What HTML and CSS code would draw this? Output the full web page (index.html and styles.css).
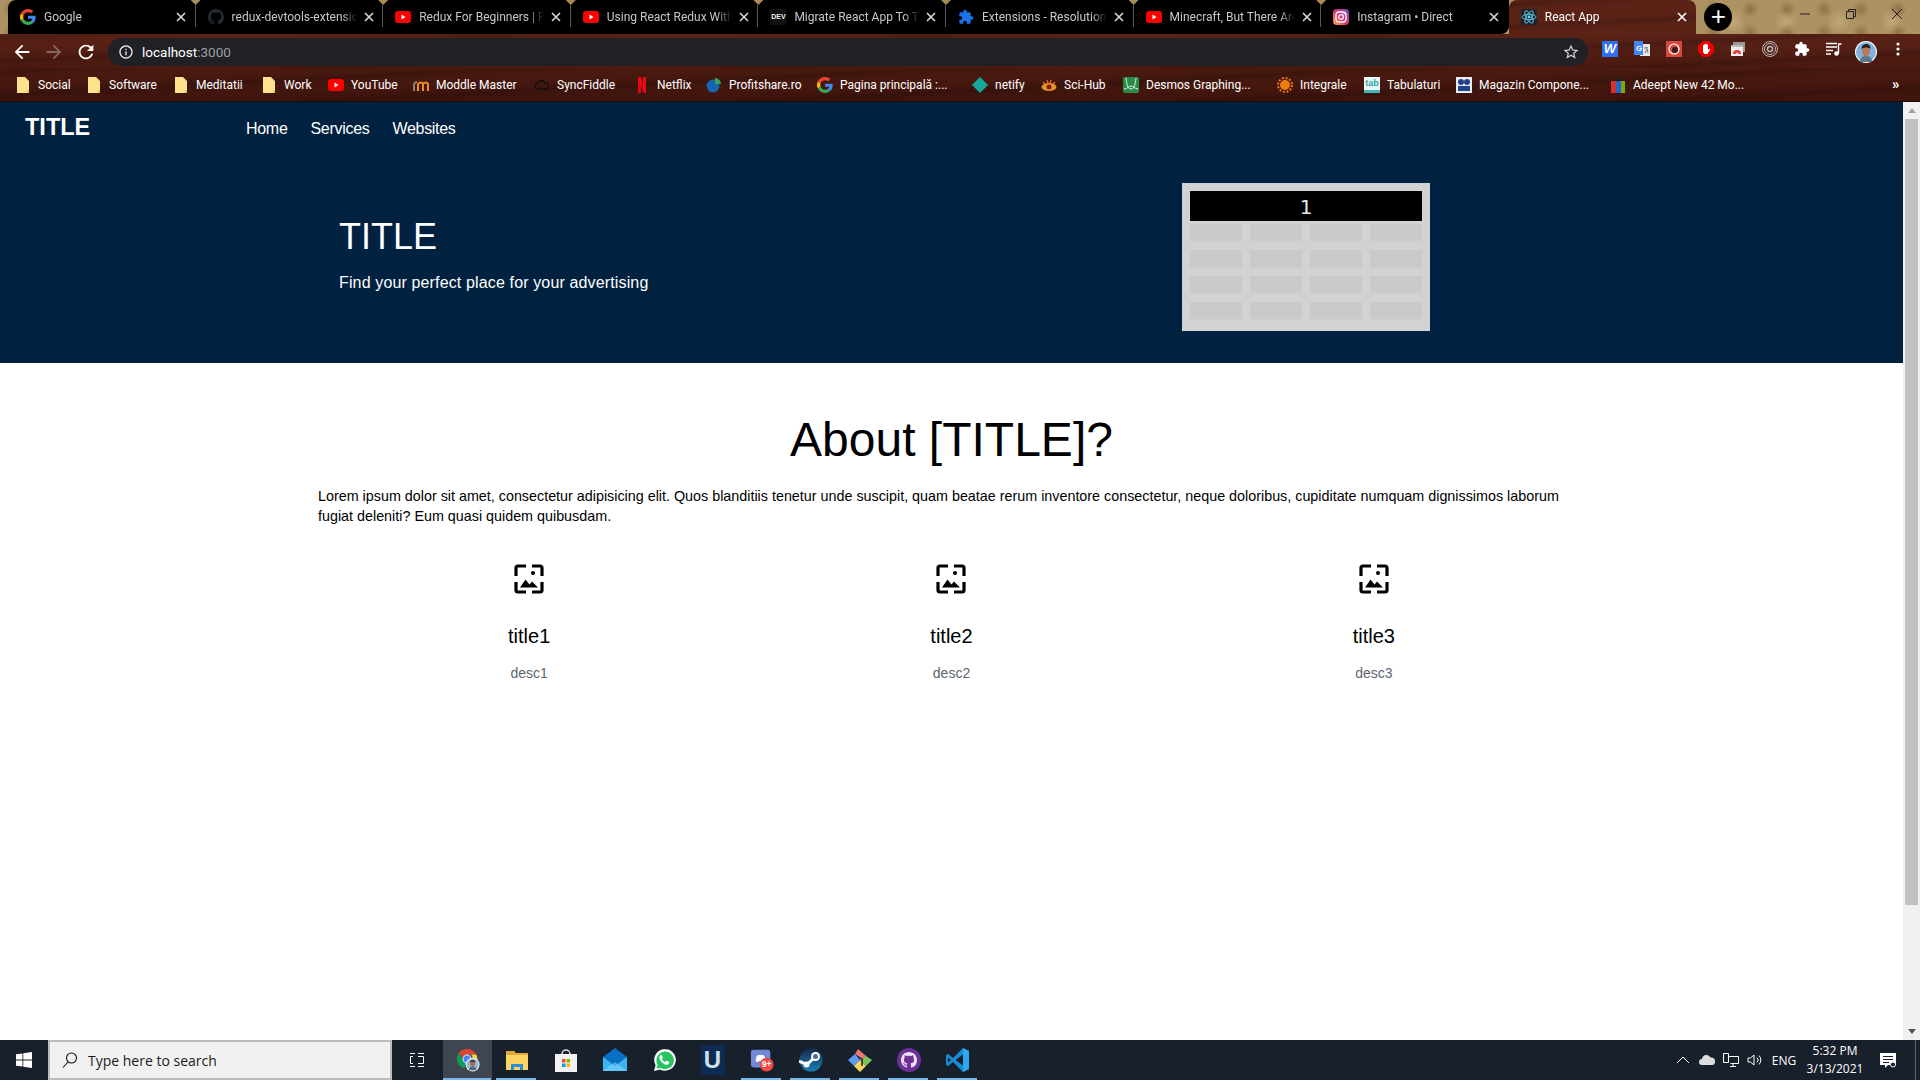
FILE: index.html
```html
<!DOCTYPE html>
<html lang="en">
<head>
    <meta charset="UTF-8">
    <title>React App</title>
    <link rel="stylesheet" href="styles.css">
</head>
<body>
    <svg class="sprites" width="0" height="0">
        <symbol id="i-google" viewBox="0 0 48 48">
            <path fill="#EA4335" d="M24 9.5c3.54 0 6.71 1.22 9.21 3.6l6.85-6.85C35.9 2.38 30.47 0 24 0 14.62 0 6.51 5.38 2.56 13.22l7.98 6.19C12.43 13.72 17.74 9.5 24 9.5z"/>
            <path fill="#4285F4" d="M46.98 24.55c0-1.57-.15-3.09-.38-4.55H24v9.02h12.94c-.58 2.96-2.26 5.48-4.78 7.18l7.73 6c4.51-4.18 7.09-10.36 7.09-17.65z"/>
            <path fill="#FBBC05" d="M10.53 28.59c-.48-1.45-.76-2.99-.76-4.59s.27-3.14.76-4.59l-7.98-6.19C.92 16.46 0 20.12 0 24c0 3.88.92 7.54 2.56 10.78l7.97-6.19z"/>
            <path fill="#34A853" d="M24 48c6.48 0 11.93-2.13 15.89-5.81l-7.73-6c-2.15 1.45-4.92 2.3-8.16 2.3-6.26 0-11.57-4.22-13.47-9.91l-7.98 6.19C6.51 42.62 14.62 48 24 48z"/>
        </symbol>
        <symbol id="i-github" viewBox="0 0 16 16">
            <path d="M8 0C3.58 0 0 3.58 0 8c0 3.54 2.29 6.53 5.47 7.59.4.07.55-.17.55-.38 0-.19-.01-.82-.01-1.49-2.01.37-2.53-.49-2.69-.94-.09-.23-.48-.94-.82-1.13-.28-.15-.68-.52-.01-.53.63-.01 1.08.58 1.23.82.72 1.21 1.87.87 2.33.66.07-.52.28-.87.51-1.07-1.78-.2-3.64-.89-3.64-3.95 0-.87.31-1.59.82-2.15-.08-.2-.36-1.02.08-2.12 0 0 .67-.21 2.2.82.64-.18 1.32-.27 2-.27.68 0 1.36.09 2 .27 1.53-1.04 2.2-.82 2.2-.82.44 1.1.16 1.92.08 2.12.51.56.82 1.27.82 2.15 0 3.07-1.87 3.75-3.65 3.95.29.25.54.73.54 1.48 0 1.07-.01 1.93-.01 2.2 0 .21.15.46.55.38A8.013 8.013 0 0016 8c0-4.42-3.58-8-8-8z"/>
        </symbol>
        <symbol id="i-youtube" viewBox="0 0 16 16">
            <rect x="0" y="2" width="16" height="12" rx="3" fill="#f00"/>
            <path d="M6.5 5.5v5l4-2.5z" fill="#fff"/>
        </symbol>
        <symbol id="i-puzzle" viewBox="0 0 24 24">
            <path d="M20.5 11H19V7c0-1.1-.9-2-2-2h-4V3.5C13 2.12 11.88 1 10.5 1S8 2.12 8 3.5V5H4c-1.1 0-1.99.9-1.99 2v3.8H3.5c1.49 0 2.7 1.21 2.7 2.7s-1.21 2.7-2.7 2.7H2V20c0 1.1.9 2 2 2h3.8v-1.5c0-1.49 1.21-2.7 2.7-2.7 1.49 0 2.7 1.21 2.7 2.7V22H17c1.1 0 2-.9 2-2v-4h1.5c1.38 0 2.5-1.12 2.5-2.5S21.88 11 20.5 11z"/>
        </symbol>
        <symbol id="i-insta" viewBox="0 0 16 16">
            <defs>
                <linearGradient id="insta-grad" x1="0" y1="1" x2="1" y2="0">
                    <stop offset="0" stop-color="#fdb33c"/>
                    <stop offset=".45" stop-color="#e9306f"/>
                    <stop offset="1" stop-color="#6a4fd0"/>
                </linearGradient>
            </defs>
            <rect width="16" height="16" rx="4" fill="url(#insta-grad)"/>
            <rect x="3" y="3" width="10" height="10" rx="3" fill="none" stroke="#fff" stroke-width="1.3"/>
            <circle cx="8" cy="8" r="2.3" fill="none" stroke="#fff" stroke-width="1.3"/>
            <circle cx="11" cy="5" r=".7" fill="#fff"/>
        </symbol>
        <symbol id="i-react" viewBox="0 0 16 16">
            <rect width="16" height="16" rx="2" fill="#20232a"/>
            <g fill="none" stroke="#61dafb" stroke-width=".8">
                <ellipse cx="8" cy="8" rx="7" ry="2.7"/>
                <ellipse cx="8" cy="8" rx="7" ry="2.7" transform="rotate(60 8 8)"/>
                <ellipse cx="8" cy="8" rx="7" ry="2.7" transform="rotate(120 8 8)"/>
            </g>
            <circle cx="8" cy="8" r="1.4" fill="#61dafb"/>
        </symbol>
        <symbol id="i-folder" viewBox="0 0 16 16">
            <path d="M2 0h8l4 4v12H2z" fill="#fbe28b"/>
            <path d="M12 16v-3h2v3z" fill="#e8c55a"/>
        </symbol>
        <symbol id="i-close" viewBox="0 0 10 10">
            <path d="M1 1l8 8M9 1l-8 8" fill="none" stroke="currentColor" stroke-width="1.6"/>
        </symbol>
        <symbol id="i-image" viewBox="0 0 32 32">
            <g fill="none" stroke="#000" stroke-width="3.2">
                <path d="M3 13V5a2 2 0 0 1 2-2h8"/>
                <path d="M19 3h8a2 2 0 0 1 2 2v8"/>
                <path d="M29 19v8a2 2 0 0 1-2 2h-8"/>
                <path d="M13 29H5a2 2 0 0 1-2-2v-8"/>
            </g>
            <circle cx="20" cy="10" r="2"/>
            <path d="M7 24.5l5.5-8 4 5 2.5-3 6 6z"/>
        </symbol>
    </svg>

    <header class="browser">
        <div class="tabstrip">
            <div class="tab first">
                <svg class="favicon"><use href="#i-google"/></svg>
                <span class="tab-title">Google</span>
                <svg class="tab-close"><use href="#i-close"/></svg>
            </div>
            <div class="tab">
                <svg class="favicon fav-github"><use href="#i-github"/></svg>
                <span class="tab-title">redux-devtools-extension</span>
                <svg class="tab-close"><use href="#i-close"/></svg>
            </div>
            <div class="tab">
                <svg class="favicon"><use href="#i-youtube"/></svg>
                <span class="tab-title">Redux For Beginners | React</span>
                <svg class="tab-close"><use href="#i-close"/></svg>
            </div>
            <div class="tab">
                <svg class="favicon"><use href="#i-youtube"/></svg>
                <span class="tab-title">Using React Redux With Hooks</span>
                <svg class="tab-close"><use href="#i-close"/></svg>
            </div>
            <div class="tab">
                <span class="favicon fav-dev">DEV</span>
                <span class="tab-title">Migrate React App To TypeScript</span>
                <svg class="tab-close"><use href="#i-close"/></svg>
            </div>
            <div class="tab">
                <svg class="favicon fav-puzzle"><use href="#i-puzzle"/></svg>
                <span class="tab-title">Extensions - Resolution Zoom</span>
                <svg class="tab-close"><use href="#i-close"/></svg>
            </div>
            <div class="tab">
                <svg class="favicon"><use href="#i-youtube"/></svg>
                <span class="tab-title">Minecraft, But There Are More</span>
                <svg class="tab-close"><use href="#i-close"/></svg>
            </div>
            <div class="tab last">
                <svg class="favicon"><use href="#i-insta"/></svg>
                <span class="tab-title">Instagram • Direct</span>
                <svg class="tab-close"><use href="#i-close"/></svg>
            </div>
            <div class="tab active">
                <svg class="favicon"><use href="#i-react"/></svg>
                <span class="tab-title">React App</span>
                <svg class="tab-close"><use href="#i-close"/></svg>
            </div>
            <div class="new-tab">+</div>
            <div class="win-controls">
                <svg viewBox="0 0 10 10"><path d="M0 5h10" stroke="#222" fill="none"/></svg>
                <svg viewBox="0 0 10 10"><path d="M.5 2.5h7v7h-7zM2.5 2.5v-2h7v7h-2" stroke="#222" fill="none"/></svg>
                <svg viewBox="0 0 10 10"><path d="M0 0l10 10M10 0L0 10" stroke="#222" fill="none"/></svg>
            </div>
        </div>

        <div class="toolbar">
            <div class="nav-btn">
                <svg viewBox="0 0 24 24"><path d="M20 11H7.83l5.59-5.59L12 4l-8 8 8 8 1.41-1.41L7.83 13H20v-2z"/></svg>
            </div>
            <div class="nav-btn dim">
                <svg viewBox="0 0 24 24"><path d="M4 11h12.17l-5.59-5.59L12 4l8 8-8 8-1.41-1.41L16.17 13H4v-2z"/></svg>
            </div>
            <div class="nav-btn">
                <svg viewBox="0 0 24 24"><path d="M17.65 6.35C16.2 4.9 14.21 4 12 4c-4.42 0-7.99 3.58-7.99 8s3.57 8 7.99 8c3.73 0 6.84-2.55 7.73-6h-2.08c-.82 2.33-3.04 4-5.65 4-3.31 0-6-2.69-6-6s2.69-6 6-6c1.66 0 3.14.69 4.22 1.78L13 11h7V4l-2.35 2.35z"/></svg>
            </div>
            <div class="omnibox">
                <svg class="omni-info" viewBox="0 0 24 24"><path d="M11 7h2v2h-2zm0 4h2v6h-2zm1-9C6.48 2 2 6.48 2 12s4.48 10 10 10 10-4.48 10-10S17.52 2 12 2zm0 18c-4.41 0-8-3.59-8-8s3.59-8 8-8 8 3.59 8 8-3.59 8-8 8z"/></svg>
                <span class="omni-url">localhost<span class="omni-port">:3000</span></span>
                <svg class="omni-star" viewBox="0 0 24 24"><path d="M22 9.24l-7.19-.62L12 2 9.19 8.63 2 9.24l5.46 4.73L5.82 21 12 17.27 18.18 21l-1.63-7.03L22 9.24zM12 15.4l-3.76 2.27 1-4.28-3.32-2.88 4.38-.38L12 6.1l1.71 4.04 4.38.38-3.32 2.88 1 4.28L12 15.4z"/></svg>
            </div>
            <div class="extensions">
                <div class="ext"><span class="ext-w">W</span></div>
                <div class="ext">
                    <svg viewBox="0 0 16 16">
                        <rect x="6" y="3" width="10" height="12" fill="#e8e8e8"/>
                        <path d="M0 0h9v14H0z" fill="#4285f4"/>
                        <text x="2" y="10" font-size="8" font-weight="700" fill="#fff" font-family="Liberation Sans">G</text>
                        <path d="M10 7h4M12 6v1M11 12l2-4 1 4" stroke="#777" fill="none"/>
                    </svg>
                </div>
                <div class="ext">
                    <svg viewBox="0 0 16 16">
                        <rect width="16" height="16" fill="#d8483f"/>
                        <circle cx="8" cy="8" r="5" fill="none" stroke="#fff" stroke-width="1.2"/>
                        <circle cx="9" cy="9" r="3" fill="#3a1a1a"/>
                    </svg>
                </div>
                <div class="ext">
                    <svg viewBox="0 0 16 16">
                        <path d="M5 0h6l5 5v6l-5 5H5l-5-5V5z" fill="#e00"/>
                        <path d="M5 8V4.5a.7.7 0 0 1 1.2 0v-1a.7.7 0 0 1 1.3 0V3a.7.7 0 0 1 1.3 0v1a.7.7 0 0 1 1.2 0v5l1-1c.7-.5 1.3.2 1 .7L9.5 13h-3L5 11z" fill="#fff"/>
                    </svg>
                </div>
                <div class="ext">
                    <svg viewBox="0 0 16 16">
                        <path d="M3 1h12v10H3z" fill="#999"/>
                        <path d="M1 4h12v11H1z" fill="#eee"/>
                        <path d="M3 13a4 4 0 0 1 8 0H8.5a1.500 1.500 0 0 0-3 0z" fill="#e33"/>
                        <path d="M1 4h12v2H1z" fill="#bbb"/>
                    </svg>
                </div>
                <div class="ext">
                    <svg viewBox="0 0 16 16" fill="none" stroke="#bbb">
                        <circle cx="8" cy="8" r="7.5"/>
                        <circle cx="8" cy="8" r="5.5"/>
                        <circle cx="8" cy="8" r="2.5" stroke-width="1.5"/>
                    </svg>
                </div>
                <div class="ext">
                    <svg viewBox="0 0 24 24"><use href="#i-puzzle"/></svg>
                </div>
                <div class="ext">
                    <svg viewBox="0 0 16 16">
                        <path d="M0 2.5h11M0 6h11M0 9.500h7M0 13h5" stroke="#fff" stroke-width="1.3"/>
                        <path d="M12 3h3.500M12.500 3v9" stroke="#fff" stroke-width="1.4"/>
                        <circle cx="10.5" cy="12.5" r="2.3" fill="#fff"/>
                    </svg>
                </div>
                <div class="ext">
                    <svg class="avatar" viewBox="0 0 22 22">
                        <circle cx="11" cy="11" r="11" fill="#fff"/>
                        <circle cx="11" cy="11" r="10" fill="#7fb2dc"/>
                        <path d="M5 21c0-5 3-6 6-6s6 1 6 6z" fill="#56788f"/>
                        <ellipse cx="11" cy="10" rx="4" ry="5.5" fill="#b87a5c"/>
                        <path d="M6.500 8c0-4 3-5 5-5s4 1.500 4 5c-2-2-6-2-9 0z" fill="#2a1c16"/>
                    </svg>
                </div>
                <div class="ext">
                    <svg viewBox="0 0 16 16" fill="#fff"><circle cx="8" cy="3" r="1.6"/><circle cx="8" cy="8" r="1.6"/><circle cx="8" cy="13" r="1.6"/></svg>
                </div>
            </div>
        </div>

        <div class="bookmarks">
            <a class="bm"><svg class="favicon"><use href="#i-folder"/></svg>Social</a>
            <a class="bm"><svg class="favicon"><use href="#i-folder"/></svg>Software</a>
            <a class="bm"><svg class="favicon"><use href="#i-folder"/></svg>Meditatii</a>
            <a class="bm"><svg class="favicon"><use href="#i-folder"/></svg>Work</a>
            <a class="bm"><svg class="favicon"><use href="#i-youtube"/></svg>YouTube</a>
            <a class="bm">
                <svg class="favicon" viewBox="0 0 16 16"><path d="M5 14V7c2-2 4-2 5 0v7M10 14V7c2-2 4-2 5 0v7" fill="none" stroke="#f08a24" stroke-width="2"/><path d="M1 14V8c0-2 2-3 3-3" fill="none" stroke="#8a8178" stroke-width="2"/></svg>Moddle Master</a>
            <a class="bm">
                <svg class="favicon" viewBox="0 0 16 16"><path d="M4 12a3 3 0 0 1 0-6c1-3 6-3 7 0a3 3 0 0 1 1 6z" fill="none" stroke="#111" stroke-width="1.3"/></svg>SyncFiddle</a>
            <a class="bm">
                <svg class="favicon" viewBox="0 0 16 16"><path d="M4 0h3l2 8V0h3v16l-3-.4L7 8v7.400L4 16z" fill="#e50914"/></svg>Netflix</a>
            <a class="bm">
                <svg class="favicon" viewBox="0 0 16 16"><circle cx="7" cy="9" r="6.5" fill="#1565b0"/><path d="M9 1a6 6 0 0 1 6 6H9z" fill="#3aa655"/></svg>Profitshare.ro</a>
            <a class="bm"><svg class="favicon"><use href="#i-google"/></svg>Pagina principală :...</a>
            <a class="bm">
                <svg class="favicon" viewBox="0 0 16 16"><path d="M8 0l8 8-8 8-8-8z" fill="#15a99a"/></svg>netify</a>
            <a class="bm">
                <svg class="favicon" viewBox="0 0 16 16"><ellipse cx="8" cy="10" rx="7.5" ry="4" fill="#e8922a"/><circle cx="8" cy="10" r="2.5" fill="#7a1f10"/><path d="M2 5l2 2M6 3l1 3M10 3L9 6M14 5l-2 2" stroke="#e8622a" stroke-width="1.3"/></svg>Sci-Hub</a>
            <a class="bm">
                <svg class="favicon" viewBox="0 0 16 16"><rect width="16" height="16" rx="2" fill="#2c8a45"/><path d="M3 1c1 8 2 11 5 11s4-3 5-11M1 12c3 0 5-3 7-3s4 3 7 3" fill="none" stroke="#dff" stroke-width=".9"/></svg>Desmos Graphing...</a>
            <a class="bm">
                <svg class="favicon" viewBox="0 0 16 16"><circle cx="8" cy="8" r="5" fill="#f07a10"/><circle cx="8" cy="8" r="7" fill="none" stroke="#f07a10" stroke-width="2" stroke-dasharray="2 1.7"/></svg>Integrale</a>
            <a class="bm"><span class="favicon fav-tab">tab</span>Tabulaturi</a>
            <a class="bm">
                <svg class="favicon" viewBox="0 0 16 16"><rect width="16" height="16" fill="#e8eef5"/><circle cx="5" cy="5" r="3" fill="#21418a"/><circle cx="11" cy="5" r="3" fill="#21418a"/><rect x="2" y="9" width="12" height="5" fill="#21418a"/></svg>Magazin Compone...</a>
            <a class="bm">
                <svg class="favicon" viewBox="0 0 16 16"><rect x="1" y="4" width="5" height="12" fill="#d8322c"/><rect x="6" y="4" width="5" height="12" fill="#2467c9"/><rect x="11" y="4" width="4" height="12" fill="#7da80e"/><path d="M5 4c-2-4 1-4 3 0 2-4 5-4 3 0" fill="none" stroke="#222" stroke-width="1.2"/></svg>Adeept New 42 Mo...</a>
            <span class="bm-more">»</span>
        </div>
    </header>

    <div class="viewport">
        <main class="page">
            <section class="hero">
                <nav class="topnav">
                    <div class="brand">TITLE</div>
                    <ul class="navlinks">
                        <li>Home</li>
                        <li>Services</li>
                        <li>Websites</li>
                    </ul>
                </nav>
                <div class="hero-body">
                    <div class="hero-text">
                        <h1>TITLE</h1>
                        <p>Find your perfect place for your advertising</p>
                    </div>
                    <div class="board">
                        <div class="board-head">1</div>
                        <div class="board-grid">
                            <span></span><span></span><span></span><span></span>
                            <span></span><span></span><span></span><span></span>
                            <span></span><span></span><span></span><span></span>
                            <span></span><span></span><span></span><span></span>
                        </div>
                    </div>
                </div>
            </section>

            <section class="about">
                <h2>About [TITLE]?</h2>
                <p class="about-text">Lorem ipsum dolor sit amet, consectetur adipisicing elit. Quos blanditiis tenetur unde suscipit, quam beatae rerum inventore consectetur, neque doloribus, cupiditate numquam dignissimos laborum fugiat deleniti? Eum quasi quidem quibusdam.</p>
                <div class="features">
                    <div class="feature">
                        <svg class="feature-icon"><use href="#i-image"/></svg>
                        <h3>title1</h3>
                        <p>desc1</p>
                    </div>
                    <div class="feature">
                        <svg class="feature-icon"><use href="#i-image"/></svg>
                        <h3>title2</h3>
                        <p>desc2</p>
                    </div>
                    <div class="feature">
                        <svg class="feature-icon"><use href="#i-image"/></svg>
                        <h3>title3</h3>
                        <p>desc3</p>
                    </div>
                </div>
            </section>
        </main>
        <div class="scrollbar">
            <span class="arrow-up"></span>
            <div class="track"><div class="thumb"></div></div>
            <span class="arrow-down"></span>
        </div>
    </div>

    <footer class="taskbar">
        <div class="start">
            <svg viewBox="0 0 16 16" fill="#fff"><path d="M0 2.3l6.500-.9v6.200H0zM7.300 1.300L16 0v7.600H7.300zM0 8.400h6.500v6.200L0 13.700zM7.300 8.400H16V16l-8.700-1.300z"/></svg>
        </div>
        <div class="search">
            <svg viewBox="0 0 16 16" fill="none" stroke="#111" stroke-width="1.1"><circle cx="9.5" cy="6" r="5"/><path d="M6 10l-5 5.500"/></svg>
            <span>Type here to search</span>
        </div>
        <div class="task task-view">
            <svg viewBox="0 0 16 16" fill="none" stroke="#fff"><path d="M0 1.500h5M0 14.500h5M3 4.500H.5v7H3M8 1.500h6M8 14.500h6M8 4.500h5.500v7H8"/></svg>
        </div>
        <div class="task focused open">
            <svg viewBox="0 0 26 26">
                <path d="M12 1a11 11 0 0 1 10 6H12a5 5 0 0 0-5 4L3 5a11 11 0 0 1 9-4z" fill="#db4437"/>
                <path d="M3 5l5 9a5 5 0 0 0 4 3l-3 5A11 11 0 0 1 3 5z" fill="#0f9d58"/>
                <path d="M22 7a11 11 0 0 1-10 16l5-9a5 5 0 0 0-1-7z" fill="#ffcd40"/>
                <circle cx="12" cy="12" r="4.5" fill="#4285f4" stroke="#fff"/>
                <circle cx="18" cy="18" r="7.5" fill="#fff"/>
                <circle cx="18" cy="18" r="6.5" fill="#8fb8d8"/>
                <ellipse cx="18" cy="16.5" rx="2.7" ry="3.5" fill="#a9694c"/>
                <path d="M15 15.500c0-3 6-3 6 0-2-1.200-4-1.200-6 0z" fill="#241611"/>
                <path d="M14 24c0-3 2-4 4-4s4 1 4 4z" fill="#4c6a80"/>
            </svg>
        </div>
        <div class="task open">
            <svg viewBox="0 0 24 24">
                <path d="M1 3h8l2 2h12v17H1z" fill="#e2a93a"/>
                <path d="M1 7h22v15H1z" fill="#fcd462"/>
                <path d="M6 22v-6h12v6h-3v-3H9v3z" fill="#2b8fd6"/>
            </svg>
        </div>
        <div class="task">
            <svg viewBox="0 0 24 24">
                <path d="M8 6a4 4 0 0 1 8 0" fill="none" stroke="#ddd" stroke-width="1.5"/>
                <path d="M1 6h22v18H1z" fill="#f2f2f2"/>
                <path d="M8 11h3.500v3.500H8z" fill="#f25022"/><path d="M12.500 11H16v3.500h-3.500z" fill="#7fba00"/>
                <path d="M8 15.500h3.500V19H8z" fill="#00a4ef"/><path d="M12.500 15.500H16V19h-3.500z" fill="#ffb900"/>
            </svg>
        </div>
        <div class="task">
            <svg viewBox="0 0 24 24">
                <path d="M12 0L0 9v14h24V9z" fill="#0a6fc2"/>
                <path d="M0 9l12 9 12-9v14H0z" fill="#3cb4ee"/>
                <path d="M0 23l12-9 12 9z" fill="#8adcff" opacity=".5"/>
            </svg>
        </div>
        <div class="task">
            <svg viewBox="0 0 24 24">
                <path d="M2 23l1.600-5.800A10.800 10.800 0 1 1 8 21.500z" fill="#fff"/>
                <path d="M4.500 20.500l1-3.700A8.800 8.800 0 1 1 8.700 20z" fill="#29c45f"/>
                <path d="M9 7c-1 .3-1.800 1.500-1.500 3 .6 3 3.500 6 6.500 6.800 1.500.3 2.700-.5 3-1.500l.2-1.300-2.700-1.300-1.200 1.400c-1.500-.6-2.800-1.900-3.500-3.500L11 9.500 9.800 7z" fill="#fff"/>
            </svg>
        </div>
        <div class="task">
            <span class="app-u">U</span>
        </div>
        <div class="task open">
            <svg viewBox="0 0 26 26">
                <rect x="1" y="2" width="21" height="19" rx="3" fill="#7289da"/>
                <path d="M6 14c1-6 2-6 3-6.500h5c1 .5 2 .5 3 6.500-1 1-2 1.200-3 1.200l-.7-1H9.700l-.7 1c-1 0-2-.2-3-1.200z" fill="#fff"/>
                <circle cx="18" cy="18" r="7.5" fill="#f04747"/>
                <text x="18" y="21" font-size="9" font-weight="700" fill="#fff" text-anchor="middle" font-family="Liberation Sans">9+</text>
            </svg>
        </div>
        <div class="task open">
            <svg viewBox="0 0 24 24">
                <defs>
                    <linearGradient id="steam-grad" x1="0" y1="0" x2="0" y2="1">
                        <stop offset="0" stop-color="#16294f"/>
                        <stop offset="1" stop-color="#1a7fb5"/>
                    </linearGradient>
                </defs>
                <circle cx="12" cy="12" r="11.5" fill="url(#steam-grad)"/>
                <path d="M0 13l8 3.500 7-6.500" fill="none" stroke="#fff" stroke-width="3"/>
                <circle cx="16.5" cy="8.5" r="4.5" fill="#fff"/>
                <circle cx="16.5" cy="8.5" r="2.5" fill="#4c6a95"/>
                <circle cx="7.5" cy="16.5" r="3" fill="#fff"/>
            </svg>
        </div>
        <div class="task open">
            <svg viewBox="0 0 24 24">
                <path d="M7 6l5 6-6 6-6-6z" fill="#5e9bf2"/>
                <path d="M12 12l6 6-6 6-6-6z" fill="#f5d867"/>
                <path d="M15 6l9 6-6 6-6-6z" fill="#7dc45a"/>
                <path d="M7 6l3-5 8 7-3 3z" fill="#ee7474"/>
                <path d="M14 10v8" stroke="#222" stroke-width="1.5"/>
            </svg>
        </div>
        <div class="task open">
            <svg viewBox="0 0 24 24">
                <circle cx="12" cy="12" r="12" fill="#6e2f96"/>
                <use href="#i-github" x="4" y="4" width="16" height="16" fill="#efe2f7"/>
            </svg>
        </div>
        <div class="task open">
            <svg viewBox="0 0 24 24">
                <path d="M17 0l6 3v18l-6 3-10-10-5 4-2-1V7l2-1 5 4z" fill="#1a8ad4"/>
                <path d="M17 6.500v11L9.500 12z" fill="#18202b"/>
                <path d="M2 9.500L4.800 12 2 14.500z" fill="#18202b"/>
                <path d="M17 0l6 3v18l-6 3z" fill="#2fa7ee"/>
            </svg>
        </div>

        <div class="tray">
            <div class="tray-icon">
                <svg viewBox="0 0 16 16" fill="none" stroke="#fff"><path d="M2 11l6-6 6 6"/></svg>
            </div>
            <div class="tray-icon">
                <svg viewBox="0 0 16 16" fill="#ddd"><path d="M3 13a3 3 0 0 1 0-6 4.500 4.500 0 0 1 8.500-1.500A3.800 3.800 0 0 1 16 10c0 2-1 3-3 3z"/></svg>
            </div>
            <div class="tray-icon">
                <svg viewBox="0 0 16 16" fill="none" stroke="#fff"><path d="M.5 1.500h5v9h-5zM5.500 4.500h10v7h-8M10 11.500v3M7 14.500h6"/></svg>
            </div>
            <div class="tray-icon">
                <svg viewBox="0 0 16 16" fill="none" stroke="#fff"><path d="M1 6v4h2.500L7 13V3L3.500 6zM10 5.500a3.500 3.500 0 0 1 0 5M12 3.500a6.500 6.500 0 0 1 0 9"/></svg>
            </div>
            <div class="tray-lang">ENG</div>
            <div class="tray-clock">
                <span>5:32 PM</span>
                <span>3/13/2021</span>
            </div>
            <div class="tray-notify">
                <svg viewBox="0 0 16 16"><path d="M0 1h16v12H8l-3 3v-3H0z" fill="#fff"/><path d="M3 4.500h10M3 7.500h10M3 10.500h6" stroke="#18202b"/><circle cx="13" cy="12.500" r="2.500" fill="#18202b" stroke="#fff"/></svg>
            </div>
            <div class="show-desktop"></div>
        </div>
    </footer>
</body>
</html>
```

FILE: styles.css
```css
* {
    box-sizing: border-box;
}

:root {
    --wood: repeating-linear-gradient(177deg, rgba(0, 0, 0, 0) 0, rgba(0, 0, 0, 0.14) 4px, rgba(0, 0, 0, 0) 9px, rgba(120, 40, 20, 0.06) 15px, rgba(0, 0, 0, 0) 23px),
        linear-gradient(180deg, #5a2216 34px, #4c1b11 60px, #3c130c 102px);
    --chrome-font: Roboto, "Noto Sans", sans-serif;
    --ui-font: "Open Sans", "Noto Sans", sans-serif;
}

html, body {
    height: 100%;
}

body {
    margin: 0;
    height: 100vh;
    display: flex;
    flex-direction: column;
    overflow: hidden;
    font-family: "Liberation Sans", Arial, sans-serif;
    background: #fff;
}

.sprites {
    position: absolute;
}

svg {
    display: block;
    flex: none;
}

/* browser chrome */
.browser {
    flex: none;
    height: 102px;
    color: #fff;
    font-family: var(--chrome-font);
    border-bottom: 1px solid #1c0a06;
}

.tabstrip {
    height: 34px;
    display: flex;
    padding-left: 8px;
    background:
        radial-gradient(circle at 30% 40%, rgba(110, 80, 40, 0.45) 0, rgba(110, 80, 40, 0) 9px) 0 0 / 37px 23px,
        radial-gradient(circle at 70% 70%, rgba(215, 190, 140, 0.5) 0, rgba(215, 190, 140, 0) 12px) 0 0 / 53px 31px,
        #ad9263;
}

.tab {
    position: relative;
    width: 187.6px;
    display: flex;
    align-items: center;
    padding-left: 12px;
    background: #000;
    color: #c4c7cb;
    font-size: 12px;
}

.tab.first {
    border-top-left-radius: 8px;
}

.tab.last {
    border-bottom-right-radius: 8px;
}

/* separator and the small notch at the top between tabs */
.tab:not(.first):not(.active)::before {
    content: "";
    position: absolute;
    left: -1px;
    top: 5px;
    width: 1px;
    height: 22px;
    background: #54585c;
}

.tab:not(.first):not(.active)::after {
    content: "";
    position: absolute;
    left: -5px;
    top: 0;
    width: 10px;
    height: 5px;
    background: #a98b58;
    clip-path: polygon(0 0, 100% 0, 50% 100%);
}

.tab.active {
    color: #fff;
    background: var(--wood) fixed;
    border-radius: 8px 8px 0 0;
}

.favicon {
    width: 16px;
    height: 16px;
    flex: none;
}

.fav-github {
    fill: #24292e;
}

.fav-puzzle {
    fill: #1a73e8;
}

.fav-dev {
    display: block;
    overflow: hidden;
    background: #111;
    color: #eee;
    font: 700 7px/16px "Liberation Sans", sans-serif;
    text-align: center;
}

.fav-tab {
    display: block;
    overflow: hidden;
    background: #eaf6f6;
    color: #2aa6a6;
    border-bottom: 3px solid #45b6b6;
    font: 700 9px/12px "Liberation Sans", sans-serif;
    text-align: center;
}

.tab-title {
    width: 125px;
    margin-left: 8px;
    overflow: hidden;
    white-space: nowrap;
    -webkit-mask-image: linear-gradient(90deg, #000 88%, transparent);
    mask-image: linear-gradient(90deg, #000 88%, transparent);
}

.tab-close {
    width: 10px;
    height: 10px;
    margin-left: 7px;
    color: #d8dadc;
}

.tab.active .tab-close {
    color: #fff;
}

.new-tab {
    width: 28px;
    height: 28px;
    margin: 3px 0 0 8px;
    border-radius: 50%;
    background: #000;
    font: 400 26px/27px "Liberation Sans", sans-serif;
    text-align: center;
}

.win-controls {
    margin-left: auto;
    display: flex;
    align-items: center;
    gap: 36px;
    width: 139px;
    padding: 0 2px 6px 19px;
}

.win-controls svg {
    width: 10px;
    height: 10px;
}

.toolbar {
    height: 34px;
    display: flex;
    align-items: center;
    padding: 2px 0 0 6px;
    background: var(--wood) fixed;
}

.nav-btn {
    width: 32px;
    display: flex;
    justify-content: center;
    fill: #fff;
}

.nav-btn svg {
    width: 22px;
    height: 22px;
}

.nav-btn.dim {
    fill: #85675f;
}

.omnibox {
    width: 1480px;
    height: 28px;
    margin: 0 6px 0 6px;
    display: flex;
    align-items: center;
    border-radius: 14px;
    background: #202124;
    padding: 0 8px 0 10px;
}

.omni-info {
    width: 16px;
    height: 16px;
    fill: #e8eaed;
}

.omni-url {
    margin-left: 8px;
    font-size: 13.5px;
}

.omni-port {
    color: #9aa0a6;
}

.omni-star {
    width: 18px;
    height: 18px;
    margin-left: auto;
    fill: #d0d2d4;
}

.extensions {
    display: flex;
}

.ext {
    width: 32px;
    display: flex;
    justify-content: center;
    fill: #fff;
}

.ext svg {
    width: 16px;
    height: 16px;
}

.ext svg.avatar {
    width: 22px;
    height: 22px;
}

.ext-w {
    width: 16px;
    height: 16px;
    background: #2f6ff0;
    font: italic 700 13px/16px "Liberation Sans", sans-serif;
    text-align: center;
}

.bookmarks {
    height: 33px;
    display: grid;
    grid-template-columns: 71px 87px 88px 67px 85px 121px 100px 72px 111px 155px 69px 82px 154px 87px 92px 154px 282px 16px;
    align-items: center;
    padding-left: 15px;
    background: var(--wood) fixed;
    font-size: 12px;
}

.bm {
    display: flex;
    align-items: center;
    gap: 7px;
    white-space: nowrap;
}

.bm-more {
    font-size: 15px;
    font-weight: 700;
    line-height: 1;
}

/* page area */
.viewport {
    flex: 1;
    min-height: 0;
    display: flex;
}

.page {
    flex: 1;
    min-width: 0;
}

.hero {
    height: 261px;
    background: #00213f;
    color: #fff;
}

.topnav {
    height: 50px;
    display: flex;
    align-items: center;
    padding-left: 25px;
}

.brand {
    width: 221px;
    font-size: 23.5px;
    font-weight: 700;
}

.navlinks {
    display: flex;
    gap: 23px;
    margin: 3px 0 0;
    padding: 0;
    list-style: none;
    font-size: 16px;
    letter-spacing: -0.3px;
}

.hero-body {
    display: flex;
    justify-content: space-between;
    margin-top: 31px;
    padding: 0 473px 0 339px;
}

.hero-text h1 {
    margin: 24px 0 0;
    font-size: 36px;
    font-weight: 400;
    line-height: 60px;
}

.hero-text p {
    margin: 3px 0 0;
    font-size: 16px;
    line-height: 26px;
    letter-spacing: 0.14px;
}

.board {
    width: 248px;
    height: 148px;
    padding: 8px;
    background: #d2d2d2;
}

.board-head {
    height: 30px;
    margin-bottom: 3px;
    background: #000;
    color: #e8e8e8;
    font-family: "DejaVu Sans", sans-serif;
    font-size: 20px;
    line-height: 32px;
    text-align: center;
}

.board-grid {
    display: grid;
    grid-template-columns: repeat(4, 52px);
    grid-auto-rows: 18px;
    gap: 8px;
}

.board-grid span {
    background: #c9c9c9;
    border-bottom: 2px solid #cdcdcd;
}

.about {
    padding: 47px 318px 0;
}

.about h2 {
    margin: 0;
    font-size: 48px;
    font-weight: 400;
    line-height: 60px;
    text-align: center;
}

.about-text {
    margin: 16px 0 0;
    font-size: 14.34px;
    line-height: 20px;
}

.features {
    display: grid;
    grid-template-columns: repeat(3, 1fr);
    margin-top: 37px;
}

.feature {
    display: flex;
    flex-direction: column;
    align-items: center;
}

.feature-icon {
    width: 32px;
    height: 32px;
}

.feature h3 {
    margin: 29px 0 0;
    font-size: 20px;
    font-weight: 400;
    line-height: 24px;
}

.feature p {
    margin: 17px 0 0;
    color: #5c6670;
    font-size: 14px;
    line-height: 16px;
}

.scrollbar {
    width: 17px;
    flex: none;
    display: flex;
    flex-direction: column;
    align-items: center;
    background: #f1f1f1;
}

.track {
    flex: 1;
    width: 100%;
    padding: 0 2px;
}

.thumb {
    height: 786px;
    background: #c1c1c1;
}

.arrow-up, .arrow-down {
    width: 0;
    height: 0;
    margin: 6px 0;
    border-left: 4px solid transparent;
    border-right: 4px solid transparent;
}

.arrow-up {
    border-bottom: 5px solid #a3a3a3;
}

.arrow-down {
    border-top: 5px solid #505050;
}

/* windows taskbar */
.taskbar {
    flex: none;
    height: 40px;
    display: flex;
    background: #18202b;
    color: #fff;
    font-family: var(--ui-font);
}

.start {
    width: 48px;
    display: flex;
    align-items: center;
    justify-content: center;
}

.start svg {
    width: 16px;
    height: 16px;
}

.search {
    width: 344px;
    display: flex;
    align-items: center;
    gap: 10px;
    padding-left: 12px;
    background: #f1f1f1;
    border: 2px solid #bcbcbc;
    color: #1a1a1a;
    font-size: 14px;
}

.search svg {
    width: 16px;
    height: 16px;
}

.task {
    position: relative;
    width: 49px;
    display: flex;
    align-items: center;
    justify-content: center;
}

.task svg {
    width: 24px;
    height: 24px;
}

.task-view {
    width: 51px;
}

.task-view svg {
    width: 16px;
    height: 16px;
}

.task.focused {
    background: #3f4650;
}

.task.open::after {
    content: "";
    position: absolute;
    left: 4px;
    right: 5px;
    bottom: 0;
    height: 2px;
    background: #76b9ed;
}

.task.focused::after {
    left: 0;
    right: 1px;
}

.app-u {
    width: 24px;
    height: 30px;
    background: #0c2a52;
    color: #cfe0ea;
    font: 700 24px/30px "Liberation Sans", sans-serif;
    text-align: center;
}

.tray {
    margin-left: auto;
    display: flex;
    align-items: center;
    height: 100%;
}

.tray-icon {
    width: 24px;
    display: flex;
    justify-content: center;
}

.tray-icon svg {
    width: 16px;
    height: 16px;
}

.tray-lang {
    width: 34px;
    font-size: 12px;
    text-align: center;
}

.tray-clock {
    width: 68px;
    display: flex;
    flex-direction: column;
    align-items: center;
    font-size: 12px;
    line-height: 18px;
}

.tray-notify {
    width: 38px;
    margin-right: 8px;
    display: flex;
    justify-content: center;
}

.tray-notify svg {
    width: 16px;
    height: 16px;
}

.show-desktop {
    width: 5px;
    height: 100%;
    border-left: 1px solid #5b636d;
}
```
